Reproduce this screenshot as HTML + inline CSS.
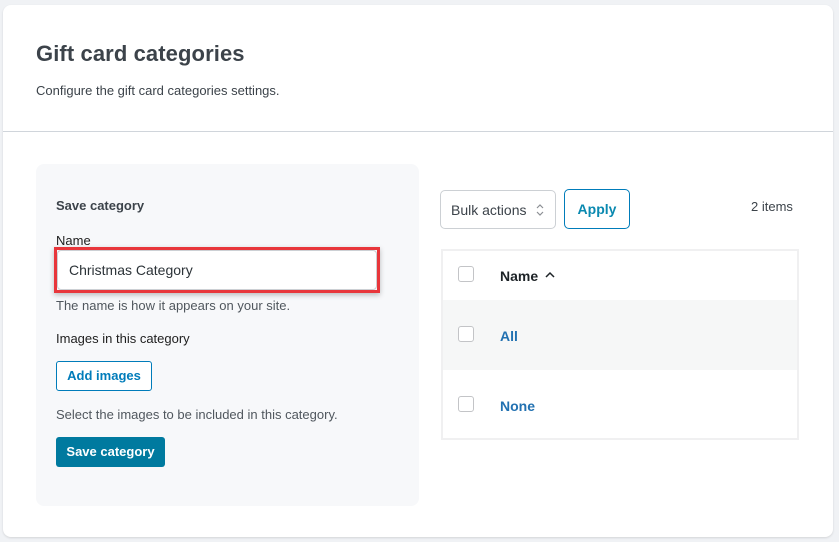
<!DOCTYPE html>
<html><head><meta charset="utf-8"><style>
*{box-sizing:border-box;margin:0;padding:0}
body{width:839px;height:542px;background:#f0f2f5;font-family:"Liberation Sans",sans-serif;color:#3c434a;position:relative;overflow:hidden}
.card{position:absolute;left:3px;top:5px;width:830px;height:532px;background:#fff;border-radius:8px;box-shadow:0 1px 2px rgba(0,0,0,.12)}
.abs{position:absolute}
h1{position:absolute;left:33px;top:36px;font-size:22px;font-weight:bold;color:#3c434a;letter-spacing:.1px}
.sub{left:33px;top:78px;font-size:13px;color:#3c434a}
.hr{left:0;top:126px;width:830px;height:1px;background:#d0d5db}
.panel{left:33px;top:159px;width:383px;height:342px;background:#f7f8fa;border-radius:8px}
.t13{font-size:13px}
.input{background:#fff;border:1px solid #ccd0d4;border-radius:4px;font-size:14px;padding:11px 11px;color:#2c3338}
.red{border:3px solid #e8363b;box-shadow:0 2px 5px rgba(0,0,0,.25)}
.btno{border:1px solid #007cba;color:#007cba;border-radius:4px;font-weight:bold;font-size:13px;text-align:center;background:#fff}
.btnp{width:109px;height:30px;background:#007a9f;color:#fff;border-radius:3px;font-weight:bold;font-size:13px;text-align:center;line-height:30px}
.table{left:438px;top:244px;width:358px;height:191px;border:2px solid #f0f0f1}
.cb{width:16px;height:16px;border:1px solid #c3c4c7;border-radius:3px;background:#fff}
</style></head><body>
<div class="card">
<h1>Gift card categories</h1>
<div class="abs sub">Configure the gift card categories settings.</div>
<div class="abs hr"></div>
<div class="abs panel"></div>
<div class="abs t13" style="left:53px;top:193px;font-weight:bold">Save category</div>
<div class="abs t13" style="left:53px;top:228px;color:#1e1e1e">Name</div>
<div class="abs red" style="left:51px;top:242px;width:326px;height:46px"></div>
<div class="abs input" style="left:54px;top:245px;width:320px;height:40px">Christmas Category</div>
<div class="abs t13" style="left:53px;top:293px;color:#50575e">The name is how it appears on your site.</div>
<div class="abs t13" style="left:53px;top:326px;color:#1e1e1e">Images in this category</div>
<div class="abs btno" style="left:53px;top:356px;width:96px;height:30px;line-height:28px;border-radius:3px">Add images</div>
<div class="abs t13" style="left:53px;top:402px;color:#50575e">Select the images to be included in this category.</div>
<div class="abs btnp" style="left:53px;top:432px">Save category</div>

<div class="abs" style="left:437px;top:185px;width:116px;height:39px;border:1px solid #ccd0d4;border-radius:5px;font-size:14px;padding:11px 10px;color:#3c434a">Bulk actions
<svg class="abs" style="left:94px;top:12px" width="10" height="14" viewBox="0 0 10 14"><path d="M2 5l3-3 3 3M2 9l3 3 3-3" fill="none" stroke="#8c8f94" stroke-width="1.2"/></svg></div>
<div class="abs btno" style="left:561px;top:184px;width:66px;height:40px;line-height:38px;border-radius:5px;font-size:14px;color:#0a89b0">Apply</div>
<div class="abs t13" style="left:748px;top:194px">2 items</div>

<div class="abs table">
<div class="abs" style="left:0;top:49px;width:354px;height:70px;background:#f6f7f7"></div>
<div class="abs cb" style="left:15px;top:15px"></div>
<div class="abs" style="left:57px;top:17px;font-size:14px;font-weight:bold;color:#1d2327">Name</div>
<svg class="abs" style="left:101px;top:20px" width="12" height="8" viewBox="0 0 12 8"><path d="M2 6l4-4 4 4" fill="none" stroke="#1d2327" stroke-width="1.5"/></svg>
<div class="abs cb" style="left:15px;top:75px"></div>
<div class="abs" style="left:57px;top:77px;font-size:14px;font-weight:bold;color:#2271b1">All</div>
<div class="abs cb" style="left:15px;top:145px"></div>
<div class="abs" style="left:57px;top:147px;font-size:14px;font-weight:bold;color:#2271b1">None</div>
</div>
</div>
</body></html>
